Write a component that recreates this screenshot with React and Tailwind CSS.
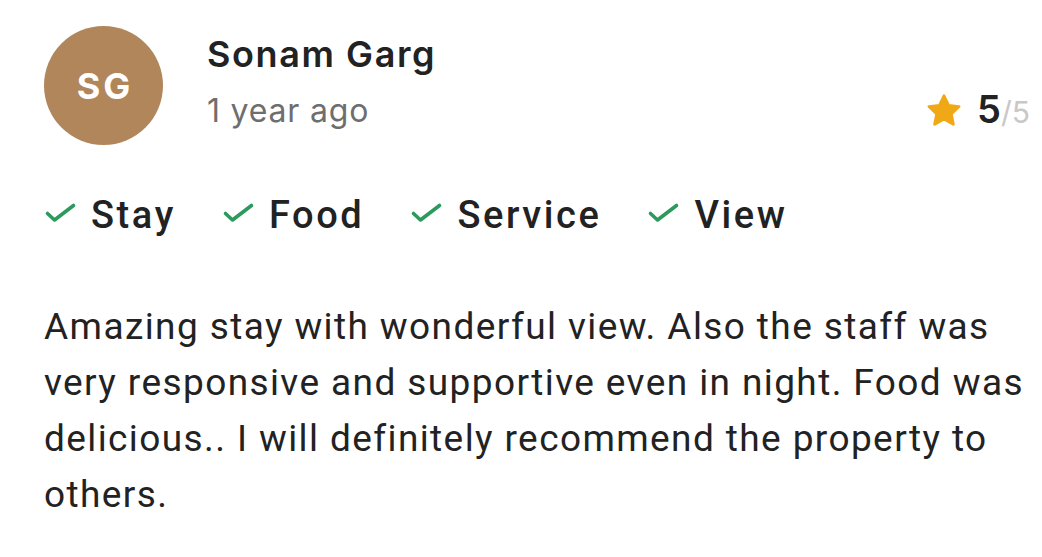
import React from 'react'

const tags = ['Stay', 'Food', 'Service', 'View']

function Check(){
  return (
    <svg width="33" height="22" viewBox="0 0 33 22" fill="none" className="shrink-0 mt-[-4px]">
      <path d="M3.5 11.5 L10.5 18 L29.5 3.5" stroke="#2b9a5c" strokeWidth="3.6" strokeLinecap="round" strokeLinejoin="round" />
    </svg>
  )
}

function Star(){
  return (
    <svg width="38" height="38" viewBox="0 0 24 24">
      <path d="M12 2.4l2.9 6 6.6.8-4.9 4.6 1.3 6.6L12 17.1l-5.9 3.3 1.3-6.6-4.9-4.6 6.6-.8z" fill="#f1a817" stroke="#f1a817" strokeWidth="1.8" strokeLinejoin="round" />
    </svg>
  )
}

export default function App(){
  return (
    <div className="w-[1042px] h-[557px] bg-white px-[44px] pt-[26px]" style={{fontFamily: 'Roboto, "Liberation Sans", sans-serif'}}>
      <div className="flex items-start" style={{fontFamily: 'Inter, "Liberation Sans", sans-serif'}}>
        <div className="w-[119px] h-[119px] rounded-full bg-[#b0865a] flex items-center justify-center text-white text-[36px] font-bold tracking-[3px] pl-[3px]">
          SG
        </div>
        <div className="ml-[44px] pt-[8px] flex-1">
          <div className="text-[36px] font-semibold text-[#222] leading-[40px] tracking-[1.6px]">Sonam Garg</div>
          <div className="flex items-center justify-between mt-[15px]">
            <span className="text-[32px] text-[#6e6e6e] leading-[40px] tracking-[0.8px]">1 year ago</span>
            <div className="flex items-center gap-[14px] mr-[-32px]">
              <Star />
              <span className="text-[38px] font-semibold text-[#222] leading-[40px]">5<span className="text-[30px] font-normal text-[#c8c8c8]">/5</span></span>
            </div>
          </div>
        </div>
      </div>

      <div className="flex items-center gap-[46px] mt-[48px]">
        {tags.map(t => (
          <div key={t} className="flex items-center gap-[14px]">
            <Check />
            <span className="text-[38px] font-medium text-[#222] leading-[44px] tracking-[2.6px]">{t}</span>
          </div>
        ))}
      </div>

      <p className="mt-[62px] text-[37px] text-[#222] leading-[56px] tracking-[1.4px] w-[990px]">
        Amazing stay with wonderful view. Also the staff was very responsive and supportive even in night. Food was delicious.. I will definitely recommend the property to others.
      </p>
    </div>
  )
}
